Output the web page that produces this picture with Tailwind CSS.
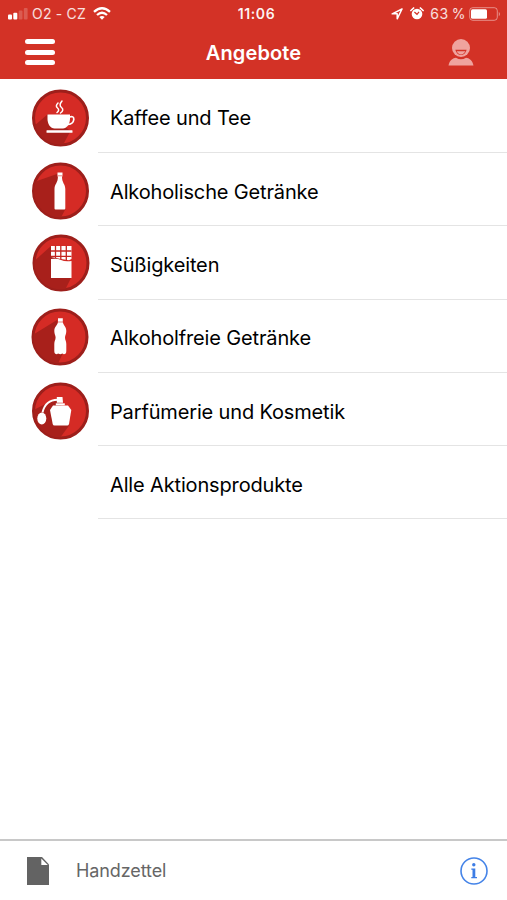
<!DOCTYPE html>
<html lang="de">

<head>
  <meta charset="UTF-8">
  <meta name="viewport" content="width=device-width, initial-scale=1.0">
  <title>Angebote</title>
  <script src="https://cdn.jsdelivr.net/npm/@tailwindcss/browser@4"></script>
</head>

<body class="bg-white font-['Inter','Liberation_Sans',sans-serif] text-black">
  <div class="flex flex-col w-[507px] h-[900px] overflow-hidden">

    <!-- Header -->
    <header class="h-[79px] shrink-0 bg-[#d33226] text-white">
      <!-- Status bar -->
      <div class="grid grid-cols-3 items-center h-[27px] pl-2 pr-[6px] text-[14px] leading-none text-white/85">
        <div class="flex items-center whitespace-nowrap">
          <svg class="w-5 h-3 mr-[4px]" viewBox="0 0 20 12" fill="#fff">
            <rect x="0" y="6.500" width="4" height="5" rx="1" />
            <rect x="5.300" y="4.800" width="4" height="6.700" rx="1" />
            <rect x="10.700" y="2.500" width="3.800" height="9" rx="1" opacity=".2" />
            <rect x="15.800" y="0" width="3.800" height="11.500" rx="1" opacity=".2" />
          </svg>
          <span class="tracking-[0.2px]">O2 - CZ</span>
          <svg class="w-[18px] h-[13px] ml-[7px]" viewBox="0 0 18 13" fill="none" stroke="#fff" stroke-width="2.300">
            <path d="M1 4.800Q9-2.400 17 4.800M4 8Q9 3.600 14 8" />
            <path d="M6.300 10Q9 7.800 11.700 10L9 12.800Z" fill="#fff" stroke="none" />
          </svg>
        </div>
        <span class="pl-1 pt-px text-center text-[14px] font-semibold tracking-[0.6px] text-white/95">11:06</span>
        <div class="flex items-center justify-end whitespace-nowrap">
          <svg class="w-3 h-3 mr-[7px]" viewBox="0 0 12 12" fill="none" stroke="#fff" stroke-width="1.500" stroke-linejoin="round">
            <path d="M11 1L1.200 5.800H6.200V10.800Z" />
          </svg>
          <svg class="w-[14px] h-[13px] mr-[6px]" viewBox="0 0 14 13">
            <circle cx="7" cy="7" r="5.300" fill="#fff" />
            <path d="M.9 3.500L3.600 1M13.100 3.500L10.400 1" stroke="#fff" stroke-width="1.700" stroke-linecap="round" />
            <path d="M4.400 5L7 7.300L9 4.800" fill="none" stroke="#d33226" stroke-width="1.200" />
          </svg>
          <span class="tracking-[0.5px] mr-[3px]">63&#8201;%</span>
          <svg class="w-8 h-[14px]" viewBox="0 0 32 14">
            <rect x=".7" y=".7" width="27.600" height="12.600" rx="3" fill="none" stroke="#fff" stroke-opacity=".45" />
            <rect x="2" y="2.300" width="16" height="9.400" rx="1.500" fill="#fff" />
            <path d="M29.800 4.700Q32 7 29.800 9.300Z" fill="#fff" opacity=".5" />
          </svg>
        </div>
      </div>
      <!-- Title bar -->
      <div class="flex items-center justify-between h-[50px] pl-[25px] pr-[33px]">
        <button type="button" aria-label="Menu" class="flex flex-col gap-[5.500px] w-[30px]">
          <span class="h-[5px] rounded-full bg-white"></span>
          <span class="h-[5px] rounded-full bg-white"></span>
          <span class="h-[5px] rounded-full bg-white"></span>
        </button>
        <h1 class="pl-1 pt-px text-[20px] leading-none font-semibold tracking-[0.1px]">Angebote</h1>
        <svg class="w-[26px] h-[27px]" viewBox="0 0 26 27" fill="#efa39e">
          <circle cx="13" cy="9" r="9" />
          <path d="M.5 26.500C1.500 21 5 19 8 18.700Q13 21.700 18 18.700C21 19 24.500 21 25.500 26.500Z" />
          <path d="M7.300 10.800H18.700Q17 16 13 16T7.300 10.800Z" fill="#d33226" />
          <path d="M8.700 12.300H17.300Q16 15.400 13 15.400T8.700 12.300Z" />
        </svg>
      </div>
    </header>

    <!-- Shared badge background -->
    <svg class="absolute w-0 h-0">
      <defs>
        <clipPath id="badgeClip">
          <circle cx="41" cy="37" r="26.500" />
        </clipPath>
        <symbol id="badge" viewBox="0 0 80 74">
          <circle cx="41" cy="37" r="27" fill="#d52b25" stroke="#9d1f1b" stroke-width="3" />
        </symbol>
      </defs>
    </svg>

    <!-- Categories -->
    <ul class="grow pt-[0.700px] pl-5 text-[20px] leading-none tracking-[-0.15px]">
      <li class="flex h-[73.300px]">
        <svg class="w-20 h-[74px] shrink-0 mt-px" viewBox="0.500 0 80 74">
          <use href="#badge" width="80" height="74" />
          <path d="M28.500 33L12 47V74H38L51 50Z" fill="#a8201b" clip-path="url(#badgeClip)" />
          <g fill="#fff">
            <path d="M28 33.500H50.500V38C50.500 43 47 47.500 43.500 47.500H35C31 47.500 28 43 28 38Z" />
            <rect x="27" y="49.300" width="26" height="2.400" rx=".5" />
          </g>
          <path d="M50 36Q54.500 34.500 54.300 38.500Q53.800 43 48.500 43.500" fill="none" stroke="#fff" stroke-width="1.700" />
          <path d="M38.500 22Q35.500 25 38 27T37.500 31.500M42.500 20Q39 24 42 26.500T41 32" fill="none" stroke="#fff" stroke-width="1.500" stroke-linecap="round" />
        </svg>
        <span class="flex items-center grow -ml-[2px] pl-[12px] pt-[5px] border-b border-[#e4e4e4]">Kaffee und Tee</span>
      </li>
      <li class="flex h-[73.300px]">
        <svg class="w-20 h-[74px] shrink-0 mt-px" viewBox="0.500 0 80 74">
          <use href="#badge" width="80" height="74" />
          <path d="M37.500 20L12 29V74H36L46 55Z" fill="#a8201b" clip-path="url(#badgeClip)" />
          <path d="M38 18.500H43V22L42.500 23C42.500 29 45.800 30 45.800 35V54.500Q45.800 55.500 44.800 55.500H36Q35 55.500 35 54.500V35C35 30 38.400 29 38.400 23L38 22Z" fill="#fff" />
          <path d="M38 21.800H43" stroke="#d52b25" stroke-width=".6" />
        </svg>
        <span class="flex items-center grow -ml-[2px] pl-[12px] pt-[5px] border-b border-[#e4e4e4]">Alkoholische Getränke</span>
      </li>
      <li class="flex h-[73.300px]">
        <svg class="w-20 h-[74px] shrink-0" viewBox="0 0 80 74">
          <use href="#badge" width="80" height="74" />
          <path d="M31 20L12 37V74H40L51 52Z" fill="#a8201b" clip-path="url(#badgeClip)" />
          <path d="M31 20H51.500V33L49 34.300L41 33L31 31Z" fill="#fff" />
          <path d="M31 25H51.500M31 30.300H51.500M35.500 19.500V33M40.800 19.500V34M46.300 19.500V35" stroke="#c42520" stroke-width="1.300" />
          <path d="M31 33Q37 32 41 34T51.500 35V52H31Z" fill="#fff" />
        </svg>
        <span class="flex items-center grow -ml-[2px] pl-[12px] pt-[5px] border-b border-[#e4e4e4]">Süßigkeiten</span>
      </li>
      <li class="flex h-[73.300px]">
        <svg class="w-20 h-[74px] shrink-0" viewBox="1 0 80 74">
          <use href="#badge" width="80" height="74" />
          <path d="M38 20L12 36V74H34L44 53Z" fill="#a8201b" clip-path="url(#badgeClip)" />
          <path d="M39 18.300H43.800V22C44 25 47.300 26.500 47.300 31C47.300 34 46 35.500 46 37.500C46 40 47.300 41 47.300 44V51Q47.300 54.200 44.800 54.200L43.500 53.500L41.300 54.200L39 53.500L38 54.200Q35.300 54.200 35.300 51V44C35.300 41 36.600 40 36.600 37.500C36.600 35.500 35.300 34 35.300 31C35.300 26.500 38.800 25 39 22Z" fill="#fff" />
          <path d="M38.700 22H44" stroke="#d52b25" stroke-width=".6" />
        </svg>
        <span class="flex items-center grow -ml-[2px] pl-[12px] pt-[5px] border-b border-[#e4e4e4]">Alkoholfreie Getränke</span>
      </li>
      <li class="flex h-[73.300px]">
        <svg class="w-20 h-[74px] shrink-0 mt-px" viewBox="0.500 0 80 74">
          <use href="#badge" width="80" height="74" />
          <path d="M38 24L12 37V74H33L50 51Z" fill="#a8201b" clip-path="url(#badgeClip)" />
          <g fill="#fff">
            <path d="M37.300 23H43L43.500 28.800H37.300Z" />
            <rect x="36.300" y="29.300" width="9" height="2" />
            <path d="M33.500 31.500H48.500L51.800 36L49.500 50Q49.200 51.500 47.700 51.500H35Q33.500 51.500 33.200 50L30.500 36Z" />
            <ellipse cx="22.300" cy="44.500" rx="4.500" ry="6" />
          </g>
          <path d="M23 38.500Q26 26 38 25.800" fill="none" stroke="#fff" stroke-width="1.900" />
        </svg>
        <span class="flex items-center grow -ml-[2px] pl-[12px] pt-[5px] border-b border-[#e4e4e4]">Parfümerie und Kosmetik</span>
      </li>
      <li class="flex h-[73.300px] pl-[78px]">
        <span class="flex items-center grow pl-[12px] pt-[5px] border-b border-[#e4e4e4]">Alle Aktionsprodukte</span>
      </li>
    </ul>

    <!-- Footer -->
    <footer class="flex items-center h-[61px] shrink-0 pl-[27px] pr-[19px] border-t-2 border-[#c8c8c8]">
      <svg class="w-[22px] h-7" viewBox="0 0 22 28">
        <path d="M0 0H15L22 7.500V28H0Z" fill="#636363" />
        <path d="M14.300 1.500V8H20.800Z" fill="#fff" />
      </svg>
      <span class="ml-[27px] pt-px text-[18px] leading-none tracking-[-0.1px] text-[#666]">Handzettel</span>
      <svg class="w-7 h-7 ml-auto" viewBox="0 0 28 28">
        <circle cx="14" cy="14" r="13" fill="none" stroke="#4584e8" stroke-width="1.600" />
        <circle cx="13.800" cy="7.800" r="1.700" fill="#3d7de5" />
        <path d="M11.300 11.500H15.300V20H17V21.300H11.300V20H12.500V12.800H11.300Z" fill="#3d7de5" />
      </svg>
    </footer>
  </div>
</body>

</html>
